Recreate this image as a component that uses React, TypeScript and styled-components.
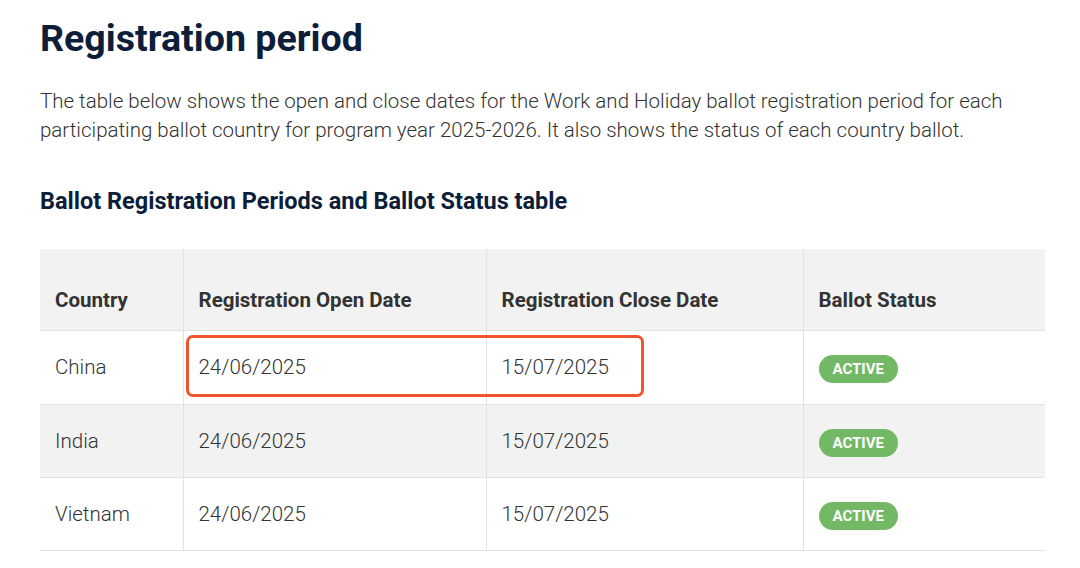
import React from "react";
import styled, { createGlobalStyle } from "styled-components";

const Global = createGlobalStyle`
  html, body { margin: 0; padding: 0; background: #fff; }
  body { font-family: Roboto, "Liberation Sans", sans-serif; }
`;

const Page = styled.div`
  padding: 13px 35px 0 40px;
  width: 1005px;
`;

const Title = styled.h1`
  margin: 0;
  font-size: 37.6px;
  line-height: 50px;
  font-weight: 700;
  color: #0c1e3a;
`;

const Lead = styled.p`
  margin: 24px 0 0;
  font-size: 20.5px;
  line-height: 29px;
  font-weight: 300;
  color: #333;
`;

const SubTitle = styled.h2`
  margin: 41px 0 0;
  font-size: 23.5px;
  line-height: 30px;
  font-weight: 700;
  color: #0c1e3a;
`;

const TableWrap = styled.div`
  position: relative;
  margin-top: 33px;
`;

const Table = styled.table`
  width: 1005px;
  border-collapse: collapse;
  table-layout: fixed;
  color: #333;
`;

const HeadCell = styled.th<{ $w: number }>`
  width: ${(p) => p.$w}px;
  height: 81px;
  padding: 21px 15px 0;
  text-align: left;
  font-size: 20.5px;
  font-weight: 700;
  background: #f2f2f2;
  border-left: 1px solid #e2e2e2;
  box-sizing: border-box;
  &:first-child { border-left: none; }
`;

const Row = styled.tr<{ $alt: boolean }>`
  background: ${(p) => (p.$alt ? "#f2f2f2" : "#fff")};
  border-top: 1px solid #e2e2e2;
  &:last-child { border-bottom: 1px solid #e2e2e2; }
`;

const Cell = styled.td<{ $h: number }>`
  height: ${(p) => p.$h}px;
  padding: 0 15px;
  font-size: 20.5px;
  font-weight: 300;
  border-left: 1px solid #e2e2e2;
  box-sizing: border-box;
  &:first-child { border-left: none; }
`;

const Badge = styled.span`
  display: inline-block;
  background: #72b865;
  color: #fff;
  font-size: 15px;
  font-weight: 700;
  line-height: 28px;
  height: 28px;
  padding: 0 14px;
  margin-top: 4px;
  border-radius: 14px;
  vertical-align: middle;
`;

const Highlight = styled.div`
  position: absolute;
  left: 146px;
  top: 86px;
  width: 458px;
  height: 62px;
  border: 3px solid #ef542c;
  border-radius: 7px;
  box-sizing: border-box;
  pointer-events: none;
`;

const rows = ["China", "India", "Vietnam"];

export default function App() {
  return (
    <>
      <Global />
      <Page>
        <Title>Registration period</Title>
        <Lead>
          The table below shows the open and close dates for the Work and Holiday ballot registration period for each
          participating ballot country for program year 2025-2026. It also shows the status of each country ballot.
        </Lead>
        <SubTitle>Ballot Registration Periods and Ballot Status table</SubTitle>
        <TableWrap>
          <Table>
            <thead>
              <tr>
                <HeadCell $w={143}>Country</HeadCell>
                <HeadCell $w={303}>Registration Open Date</HeadCell>
                <HeadCell $w={317}>Registration Close Date</HeadCell>
                <HeadCell $w={242}>Ballot Status</HeadCell>
              </tr>
            </thead>
            <tbody>
              {rows.map((c, i) => {
                const h = i === 0 ? 74 : 73;
                return (
                  <Row key={c} $alt={i % 2 === 1}>
                    <Cell $h={h}>{c}</Cell>
                    <Cell $h={h}>24/06/2025</Cell>
                    <Cell $h={h}>15/07/2025</Cell>
                    <Cell $h={h}>
                      <Badge>ACTIVE</Badge>
                    </Cell>
                  </Row>
                );
              })}
            </tbody>
          </Table>
          <Highlight />
        </TableWrap>
      </Page>
    </>
  );
}
